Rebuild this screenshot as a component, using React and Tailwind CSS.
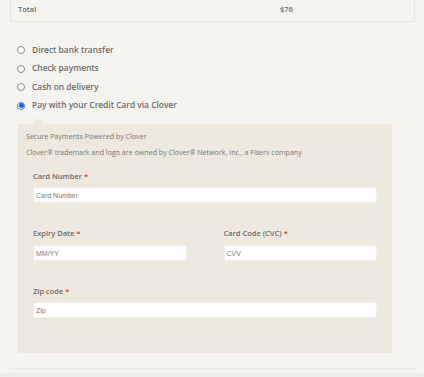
import React, { useState } from 'react';

const methods = [
  'Direct bank transfer',
  'Check payments',
  'Cash on delivery',
  'Pay with your Credit Card via Clover',
];

const Label = ({ children }) => (
  <div className="h-[12px] flex items-center text-[7.5px] font-semibold text-[#6d6d6d]">
    {children} <span className="ml-[2px] text-[#e2401c]">*</span>
  </div>
);

const Field = ({ placeholder }) => (
  <input
    className="block w-full h-[16px] bg-white border border-[#f0eee8] px-[2px] text-[7px] text-[#555] placeholder:text-[#7a7a7a] outline-none"
    style={{ fontFamily: '"Liberation Sans", Arial, sans-serif' }}
    placeholder={placeholder}
  />
);

const App = () => {
  const [selected, setSelected] = useState(3);

  return (
    <div
      className="w-[424px] h-[377px] overflow-hidden bg-[#f5f4ef] relative"
      style={{ fontFamily: '"Open Sans", sans-serif' }}
    >
      {/* Order total */}
      <div className="ml-[10px] w-[405px] h-[22px] border-x border-b border-[#e8e5dc] flex items-center text-[7.5px] font-semibold text-[#6d6d6d] pb-[2px]">
        <span className="ml-[7px] w-[262px]">Total</span>
        <span>$76</span>
      </div>

      {/* Payment methods */}
      <ul className="mt-[19px] ml-[17px] flex flex-col">
        {methods.map((m, i) => (
          <li key={m} className="h-[18.5px] flex items-center gap-[7px] text-[8.4px] font-semibold text-[#6d6d6d]">
            <span
              onClick={() => setSelected(i)}
              className={`w-[8px] h-[8px] rounded-full border flex items-center justify-center bg-white ${
                selected === i ? 'border-[#3b82f6]' : 'border-[#8a8a8a]'
              }`}
            >
              {selected === i && <span className="w-[5px] h-[5px] rounded-full bg-[#2563eb]" />}
            </span>
            <span>{m}</span>
          </li>
        ))}
      </ul>

      {/* Clover box */}
      <div className="relative mt-[9px] ml-[18px] w-[374px] h-[229px] bg-[#ede9de] px-[15px]">
        <div className="absolute -top-[6px] left-[14px] w-0 h-0 border-x-[6px] border-x-transparent border-b-[6px] border-b-[#ede9de]" />
        <div className="-ml-[7px] pt-[7px] text-[7.1px] text-[#777]">
          <div className="h-[11px] flex items-center">Secure Payments Powered by Clover</div>
          <div className="h-[11px] mt-[5px] flex items-center">
            Clover® trademark and logo are owned by Clover® Network, Inc., a Fiserv company
          </div>
        </div>

        <div className="mt-[13px]">
          <Label>Card Number</Label>
          <div className="mt-[4px]">
            <Field placeholder="Card Number" />
          </div>
        </div>

        <div className="mt-[25px] grid grid-cols-2 gap-[37px]">
          <div>
            <Label>Expiry Date</Label>
            <div className="mt-[5px]">
              <Field placeholder="MM/YY" />
            </div>
          </div>
          <div>
            <Label>Card Code (CVC)</Label>
            <div className="mt-[5px]">
              <Field placeholder="CVV" />
            </div>
          </div>
        </div>

        <div className="mt-[25px]">
          <Label>Zip code</Label>
          <div className="mt-[4px]">
            <Field placeholder="Zip" />
          </div>
        </div>
      </div>

      {/* Bottom rule */}
      <div className="mt-[15px] ml-[10px] w-[405px] border-t border-[#e8e5dc]" />
      <div className="absolute bottom-0 left-0 w-full h-[4px] bg-[#eeede8]" />
    </div>
  );
};

export default App;
